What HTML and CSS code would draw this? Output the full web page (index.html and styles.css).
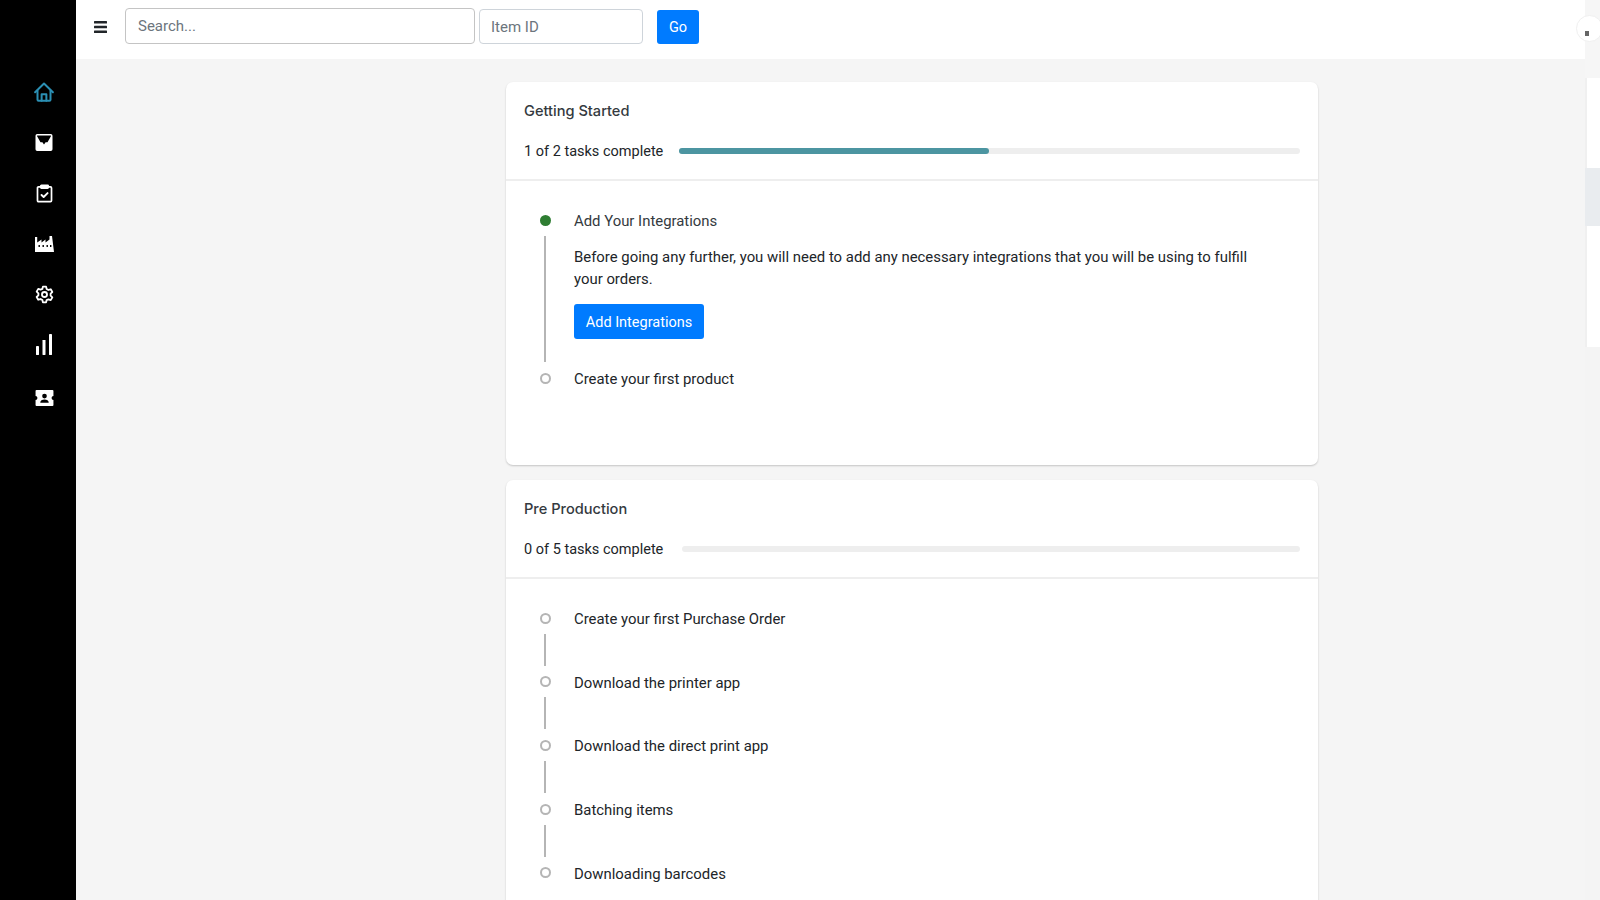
FILE: index.html
```html
<!DOCTYPE html>
<html lang="en">
<head>
    <meta charset="UTF-8">
    <meta name="viewport" content="width=device-width, initial-scale=1.0">
    <title>Getting Started</title>
    <link rel="stylesheet" href="styles.css">
</head>
<body>
    <nav class="sidebar">
        <a class="nav-item nav-active" href="#">
            <svg width="20" height="20" viewBox="0 0 16 16" fill="none" stroke="currentColor" stroke-width="1.6" stroke-linejoin="round" stroke-linecap="round"><path d="M.9 8.200 8 1.200l7.100 7"/><path d="M2.800 6.800v7.400a.8.8 0 0 0 .8.8h8.800a.8.8 0 0 0 .8-.8V6.800"/><path d="M6.100 15V9.800h3.800V15"/></svg>
        </a>
        <a class="nav-item" href="#">
            <svg width="18" height="17" viewBox="0 0 16 16" fill="currentColor"><path fill-rule="evenodd" d="M1.600 0h12.800A1.600 1.600 0 0 1 16 1.600v12.800a1.600 1.600 0 0 1-1.600 1.600H1.600A1.600 1.600 0 0 1 0 14.400V1.600A1.600 1.600 0 0 1 1.600 0zM1.500 1.500v.6l3.200 5.700h1.800L8 9.800l1.500-2h1.800l3.200-5.700v-.6z"/></svg>
        </a>
        <a class="nav-item" href="#">
            <svg width="17" height="19" viewBox="0 0 16 17" fill="none" stroke="currentColor" stroke-width="1.600" stroke-linecap="round" stroke-linejoin="round"><path d="M4.500 2.300H2.400a1 1 0 0 0-1 1v11.900a1 1 0 0 0 1 1h11.200a1 1 0 0 0 1-1V3.300a1 1 0 0 0-1-1h-2.100"/><rect x="4.500" y=".9" width="7" height="2.600" rx=".6" fill="currentColor"/><path d="m5.200 9.900 2 1.900 3.700-3.700" stroke-width="1.800"/></svg>
        </a>
        <a class="nav-item" href="#">
            <svg width="19" height="17" viewBox="0 0 19 17" fill="currentColor"><path d="M0 17V2h2.200v5.500l4.300-3v3l4-3v3l4-3V1h2.500l2 16z"/><rect x="3.500" y="10" width="1.400" height="2" fill="#000"/><rect x="7.500" y="10" width="1.400" height="2" fill="#000"/><rect x="11.500" y="10" width="1.400" height="2" fill="#000"/><rect x="15" y="10" width="1.400" height="2" fill="#000"/></svg>
        </a>
        <a class="nav-item" href="#">
            <svg width="19" height="19" viewBox="0 0 24 24" fill="none" stroke="currentColor" stroke-width="2.300" stroke-linejoin="round"><path d="M10 2h4l.7 3 2.200 1.300 3-.9 2 3.500-2.200 2.100v2.500l2.200 2.100-2 3.500-3-.9L14.700 19 14 22h-4l-.7-3-2.200-1.300-3 .9-2-3.500 2.200-2.100v-2.500L2.100 8.400l2-3.500 3 .9L9.300 5z"/><circle cx="12" cy="12" r="3.200"/></svg>
        </a>
        <a class="nav-item" href="#">
            <svg width="16" height="21" viewBox="0 0 16 21" fill="currentColor"><rect x="0" y="12" width="3" height="9" rx=".4"/><rect x="6.500" y="6" width="3" height="15" rx=".4"/><rect x="13" y="0" width="3" height="21" rx=".4"/></svg>
        </a>
        <a class="nav-item nav-last" href="#">
            <svg width="19" height="16" viewBox="0 0 19 17" fill="currentColor"><path fill-rule="evenodd" d="M1 0h17a1 1 0 0 1 1 1v5.500a2 2 0 0 0 0 4V16a1 1 0 0 1-1 1H1a1 1 0 0 1-1-1v-5.500a2 2 0 0 0 0-4V1a1 1 0 0 1 1-1zm8.500 4a2.500 2.500 0 1 0 0 5 2.500 2.500 0 0 0 0-5zM5 13.500h9c0-2-2-3.300-4.500-3.300S5 11.500 5 13.500z"/></svg>
        </a>
    </nav>

    <div class="page">
        <header class="topbar">
            <button class="menu-btn" aria-label="Menu">
                <svg width="13" height="12" viewBox="0 0 13 12" fill="currentColor"><rect width="13" height="2.400" rx=".5"/><rect y="4.800" width="13" height="2.400" rx=".5"/><rect y="9.600" width="13" height="2.400" rx=".5"/></svg>
            </button>
            <input class="search-input" type="text" placeholder="Search...">
            <input class="item-input" type="text" placeholder="Item ID">
            <button class="btn go-btn">Go</button>
        </header>

        <main class="content">
            <section class="card">
                <div class="card-head">
                    <h2>Getting Started</h2>
                    <div class="progress-row">
                        <span>1 of 2 tasks complete</span>
                        <div class="progress"><div class="progress-fill" style="width: 50%"></div></div>
                    </div>
                </div>
                <div class="card-body first-body">
                    <div class="step step-open">
                        <div class="marker"><span class="dot dot-done"></span><span class="line"></span></div>
                        <div class="step-text">
                            <h3>Add Your Integrations</h3>
                            <p>Before going any further, you will need to add any necessary integrations that you will be using to fulfill your orders.</p>
                            <button class="btn add-btn">Add Integrations</button>
                        </div>
                    </div>
                    <div class="step">
                        <div class="marker"><span class="dot"></span></div>
                        <div class="step-text">Create your first product</div>
                    </div>
                </div>
            </section>

            <section class="card">
                <div class="card-head">
                    <h2>Pre Production</h2>
                    <div class="progress-row">
                        <span>0 of 5 tasks complete</span>
                        <div class="progress progress-empty"></div>
                    </div>
                </div>
                <div class="card-body">
                    <div class="step step-gap">
                        <div class="marker"><span class="dot"></span><span class="line"></span></div>
                        <div class="step-text">Create your first Purchase Order</div>
                    </div>
                    <div class="step step-gap">
                        <div class="marker"><span class="dot"></span><span class="line"></span></div>
                        <div class="step-text">Download the printer app</div>
                    </div>
                    <div class="step step-gap">
                        <div class="marker"><span class="dot"></span><span class="line"></span></div>
                        <div class="step-text">Download the direct print app</div>
                    </div>
                    <div class="step step-gap">
                        <div class="marker"><span class="dot"></span><span class="line"></span></div>
                        <div class="step-text">Batching items</div>
                    </div>
                    <div class="step step-gap">
                        <div class="marker"><span class="dot"></span></div>
                        <div class="step-text">Downloading barcodes</div>
                    </div>
                </div>
            </section>
        </main>
    </div>

    <aside class="side-strip">
        <div class="strip-avatar"></div>
        <div class="strip-panel"></div>
        <div class="strip-grey"></div>
        <div class="strip-panel strip-tall"></div>
    </aside>
</body>
</html>
```

FILE: styles.css
```css
* {
    box-sizing: border-box;
}

html, body {
    height: 100%;
}

body {
    display: flex;
    margin: 0;
    overflow: hidden;
    background-color: #f5f5f5;
    color: #212529;
    font-family: 'Roboto', 'Liberation Sans', sans-serif;
    font-size: 14.9px;
    line-height: 22px;
}

.sidebar {
    flex: 0 0 75.5px;
    display: flex;
    flex-direction: column;
    padding-top: 67px;
    background-color: #000;
}

.nav-item {
    display: flex;
    align-items: center;
    justify-content: center;
    height: 50.5px;
    margin-left: 13px;
    color: #fff;
}

.nav-active {
    color: #2b8fb3;
}

.nav-last {
    margin-top: 3px;
}

.page {
    flex: 1;
    min-width: 0;
    display: flex;
    flex-direction: column;
}

.topbar {
    flex: 0 0 59px;
    display: flex;
    align-items: center;
    padding-left: 18.5px;
    padding-bottom: 6px;
    background-color: #fff;
}

.menu-btn {
    display: flex;
    width: 13px;
    margin-right: 18px;
    padding: 0;
    border: none;
    background: none;
    color: #212529;
}

input {
    height: 35px;
    padding: 0 11px;
    border: 1px solid #ced4da;
    border-radius: 4px;
    background-color: #fff;
    font-family: inherit;
    font-size: 15px;
}

input::placeholder {
    color: #6c757d;
    opacity: 1;
}

.search-input {
    width: 350px;
    height: 36px;
    margin-top: -1px;
    margin-right: 4px;
    padding-left: 12px;
    border-color: #c4c4c4;
}

.item-input {
    width: 164px;
    margin-right: 14px;
}

.btn {
    border: none;
    border-radius: 3px;
    background-color: #007bff;
    color: #fff;
    font-family: inherit;
    font-size: 14.5px;
}

.go-btn {
    width: 42px;
    height: 34px;
    margin-top: 1px;
}

.content {
    flex: 1;
    display: flex;
    flex-direction: column;
    gap: 15px;
    width: 811.5px;
    margin-left: 430.5px;
    padding-top: 23px;
}

.card {
    flex: none;
    border-radius: 7px;
    background-color: #fff;
    box-shadow: 0 1px 2px rgba(0, 0, 0, 0.2);
}

.card-head {
    height: 99px;
    padding: 18px 18px 0 18px;
    border-bottom: 2px solid #eeeeee;
}

h2 {
    margin: 0;
    color: #343a40;
    font-family: 'Inter', 'Roboto', sans-serif;
    font-size: 14.6px;
    font-weight: 500;
    line-height: 22px;
}

.progress-row {
    display: flex;
    align-items: center;
    gap: 15.5px;
    margin-top: 18px;
    font-size: 14.5px;
}

.progress-row span {
    padding-top: 1px;
}

.progress {
    flex: 1;
    height: 6px;
    margin-bottom: 2px;
    border-radius: 3px;
    background-color: #eeeeee;
}

.progress-empty {
    margin-left: 3px;
}

.progress-fill {
    height: 100%;
    border-radius: 3px;
    background-color: #4c95a1;
}

.card-body {
    padding: 29px 18px 0 33.5px;
}

.first-body {
    height: 284px;
}

.step {
    display: flex;
}

.step-gap {
    height: 63.7px;
}

.step-open {
    height: 158px;
}

.marker {
    flex: 0 0 11px;
    display: flex;
    flex-direction: column;
    align-items: center;
    margin-right: 23.5px;
    padding-top: 4.5px;
}

.dot {
    flex: none;
    width: 11px;
    height: 11px;
    border: 2px solid #b5b5b5;
    border-radius: 50%;
}

.dot-done {
    border: none;
    background-color: #2e7d32;
}

.line {
    flex: 1;
    width: 2px;
    margin-top: 10px;
    margin-bottom: 6px;
    background-color: #b5b5b5;
}

.step-text {
    flex: 1;
    padding-right: 30px;
}

h3 {
    margin: 0;
    color: #343a40;
    font-size: 14.9px;
    font-weight: 400;
}

p {
    margin: 14px 0 0;
}

.add-btn {
    width: 130px;
    height: 35px;
    margin-top: 14px;
    padding-top: 2px;
}

.side-strip {
    flex: 0 0 15px;
    position: relative;
    display: flex;
    flex-direction: column;
    background-color: #f4f4f4;
}

.strip-avatar {
    height: 78px;
    background-color: #f6f6f6;
}

.strip-avatar::after {
    content: "";
    position: absolute;
    top: 15px;
    left: -9px;
    width: 25px;
    height: 25px;
    border: 1px solid #f0f0f0;
    border-radius: 50%;
    background-color: #fff;
}

.strip-avatar::before {
    content: "";
    position: absolute;
    z-index: 1;
    top: 31px;
    left: 0;
    width: 4px;
    height: 5px;
    background-color: #666;
}

.strip-panel {
    height: 90px;
    border-left: 2px solid #f0f0f0;
    background-color: #fff;
}

.strip-grey {
    height: 58px;
    background-color: #e9ecef;
}

.strip-tall {
    height: 121px;
}
```
